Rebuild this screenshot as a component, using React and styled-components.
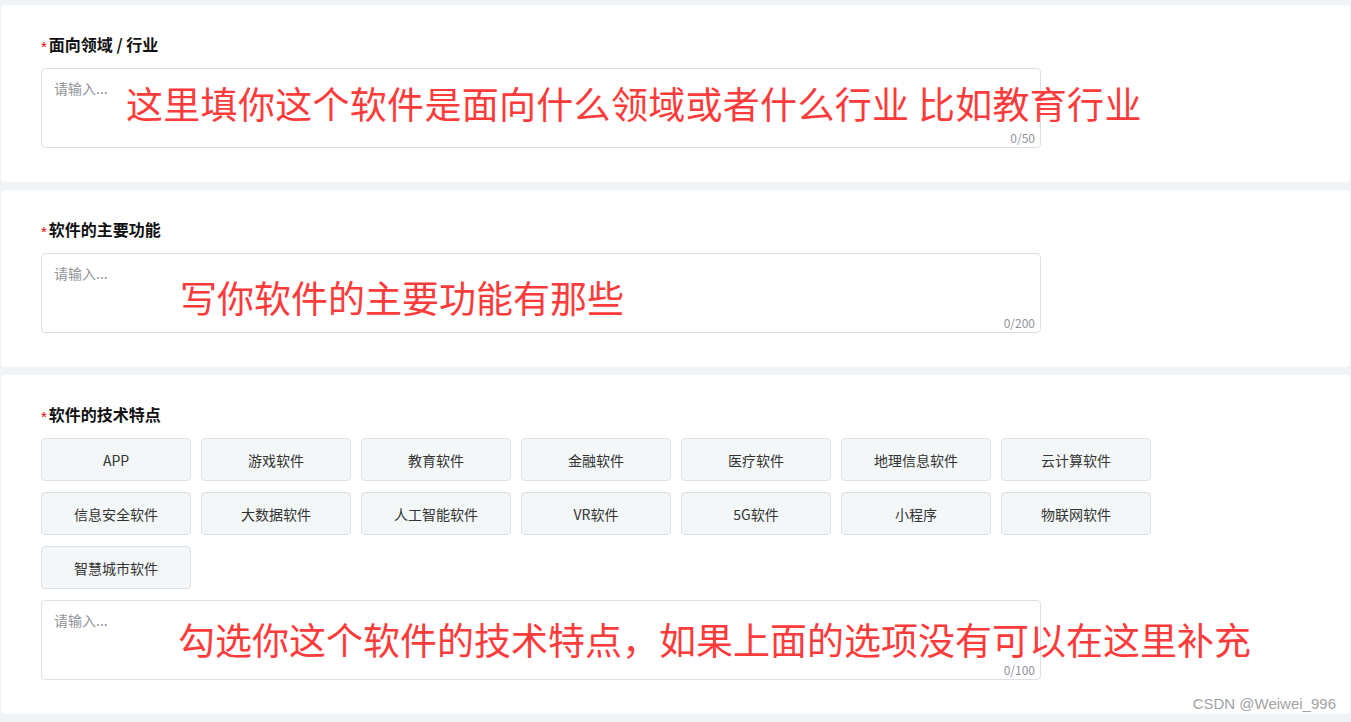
import React from "react";
import styled, { createGlobalStyle } from "styled-components";

const GlobalStyle = createGlobalStyle`
  html, body { margin: 0; padding: 0; background: #f1f4f7; }
  body { font-family: "Noto Sans CJK SC", "Noto Sans", sans-serif; }
  * { box-sizing: border-box; }
`;

const Page = styled.div`
  display: flex;
  flex-direction: column;
  gap: 8px;
  padding: 5px 1px 8px 1px;
  background: #f1f4f7;
  width: 1351px;
`;

const Card = styled.section`
  position: relative;
  background: #ffffff;
  border-radius: 4px;
  padding: 29px 40px 34px 40px;
`;

const Label = styled.div`
  display: flex;
  align-items: center;
  height: 20px;
  margin-bottom: 14px;
  font-size: 16px;
  font-weight: 700;
  color: #111;
  line-height: 20px;
`;

const Star = styled.span`
  color: #f00;
  font-size: 15px;
  font-weight: 400;
  margin-right: 2px;
  margin-top: 5px;
  font-family: "Liberation Sans", sans-serif;
`;

const Field = styled.div`
  position: relative;
  width: 1000px;
  height: 80px;
  border: 1px solid #dcdfe6;
  border-radius: 4px;
  background: #fff;
  padding: 9px 12px;
`;

const Placeholder = styled.div`
  font-size: 14px;
  line-height: 20px;
  color: #8f9399;
`;

const Counter = styled.span`
  position: absolute;
  right: 5px;
  bottom: 1px;
  font-size: 12px;
  color: #909399;
  line-height: 16px;
`;

const Note = styled.span`
  position: absolute;
  left: ${(p) => p.$left}px;
  top: ${(p) => p.$top}px;
  font-size: ${(p) => p.$size}px;
  line-height: 37px;
  height: 37px;
  color: #fd3b3b;
  white-space: pre;
  font-family: "Noto Sans CJK SC", sans-serif;
  letter-spacing: ${(p) => p.$spacing || 0}px;
`;

const TagGrid = styled.div`
  display: grid;
  grid-template-columns: repeat(7, 150px);
  column-gap: 10px;
  row-gap: 11px;
  margin-bottom: 11px;
`;

const Tag = styled.div`
  height: 43px;
  display: flex;
  align-items: center;
  justify-content: center;
  background: #f4f7f8;
  border: 1px solid #dcdfe6;
  border-radius: 4px;
  font-size: 14px;
  color: #333;
`;

const Watermark = styled.span`
  position: absolute;
  right: 14px;
  bottom: 2px;
  font-family: "Liberation Sans", Arial, sans-serif;
  font-size: 15px;
  color: #a3a3a3;
`;

const tags = [
  "APP", "游戏软件", "教育软件", "金融软件", "医疗软件", "地理信息软件", "云计算软件",
  "信息安全软件", "大数据软件", "人工智能软件", "VR软件", "5G软件", "小程序", "物联网软件",
  "智慧城市软件",
];

function TextField({ max, note }) {
  return (
    <Field>
      <Placeholder>请输入...</Placeholder>
      <Counter>0/{max}</Counter>
      <Note $left={note.left} $top={note.top} $size={note.size} $spacing={note.spacing}>
        {note.text}
      </Note>
    </Field>
  );
}

export default function App() {
  return (
    <>
      <GlobalStyle />
      <Page>
        <Card>
          <Label><Star>*</Star>面向领域 / 行业</Label>
          <TextField
            max={50}
            note={{ text: "这里填你这个软件是面向什么领域或者什么行业 比如教育行业", left: 84, top: 16, size: 37, spacing: 0.3 }}
          />
        </Card>
        <Card>
          <Label><Star>*</Star>软件的主要功能</Label>
          <TextField
            max={200}
            note={{ text: "写你软件的主要功能有那些", left: 138, top: 25, size: 37, spacing: 0 }}
          />
        </Card>
        <Card>
          <Label><Star>*</Star>软件的技术特点</Label>
          <TagGrid>
            {tags.map((t) => (
              <Tag key={t}>{t}</Tag>
            ))}
          </TagGrid>
          <TextField
            max={100}
            note={{ text: "勾选你这个软件的技术特点，如果上面的选项没有可以在这里补充", left: 136, top: 20, size: 37, spacing: 0 }}
          />
          <Watermark>CSDN @Weiwei_996</Watermark>
        </Card>
      </Page>
    </>
  );
}
